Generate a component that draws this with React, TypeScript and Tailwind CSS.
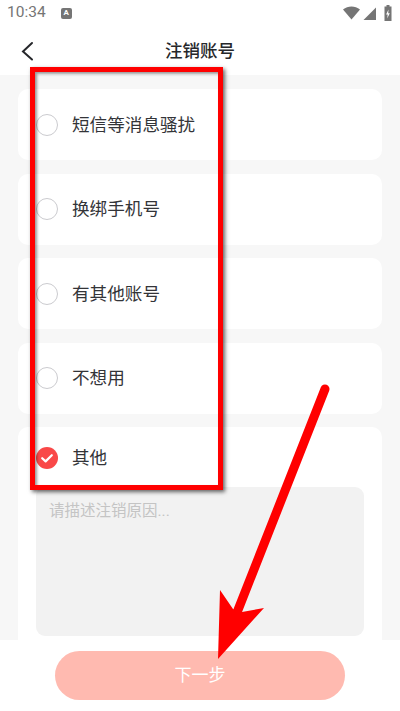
const font = { fontFamily: '"Roboto", "Noto Sans CJK SC", sans-serif' };

function Radio({ on }: { on?: boolean }) {
  if (on) {
    return (
      <svg width="22" height="22" viewBox="0 0 22 22" className="shrink-0">
        <circle cx="11" cy="11" r="11" fill="#f94848" />
        <path d="M6.200 11.200l3.400 3.200 6.200-6.200" fill="none" stroke="#fff" strokeWidth="2.200" strokeLinecap="round" strokeLinejoin="round" />
      </svg>
    );
  }
  return <span className="w-[22px] h-[22px] shrink-0 rounded-full border-[1.500px] border-[#cbcbcf] bg-white" />;
}

function Row({ label, on, className }: { label: string; on?: boolean; className: string }) {
  return (
    <div className={`flex items-center gap-[14px] pl-[18px] ${className}`}>
      <Radio on={on} />
      <span className="text-[17.600px] leading-6 text-[#333438]">{label}</span>
    </div>
  );
}

export default function App() {
  const rows = ["短信等消息骚扰", "换绑手机号", "有其他账号", "不想用"];
  return (
    <div style={font} className="relative w-[400px] h-[711px] overflow-hidden bg-white flex flex-col">
      <div className="h-[26px] shrink-0 flex items-center pl-[7px] pr-[7px] text-[#757575]">
        <span className="text-[15.500px] leading-none">10:34</span>
        <span className="ml-[15px] w-[11px] h-[11px] rounded-[2px] bg-[#757575] text-white text-[8px] font-bold flex items-center justify-center leading-none">A</span>
        <svg className="ml-auto" width="50" height="16" viewBox="0 0 50 16">
          <path d="M0 4.500C5 .5 12 .5 17 4.500L8.500 14.500Z" fill="#757575" />
          <path d="M33 2.500V15H20.500Z" fill="#757575" />
          <path d="M43.500 0h3v1.500h2V16h-7V1.500h2Z" fill="#757575" />
          <path d="M45.500 4.500l-2.400 5h1.600L44.200 13.500l2.600-5.200h-1.600Z" fill="#fff" />
        </svg>
      </div>

      <div className="h-[49px] shrink-0 relative flex items-center justify-center">
        <svg className="absolute left-[20px] top-[15px]" width="14" height="20" viewBox="0 0 14 20">
          <path d="M12 2L3 10.500l9 8" fill="none" stroke="#26272b" strokeWidth="2" strokeLinecap="round" />
        </svg>
        <span className="text-[17.500px] font-medium text-[#26272b] leading-6">注销账号</span>
      </div>

      <div className="h-[565px] shrink-0 bg-[#f7f7f7] px-[18px] pt-[14px] flex flex-col gap-[13.500px] overflow-hidden">
        {rows.map((r) => (
          <div key={r} className="h-[71px] shrink-0 bg-white rounded-[10px] flex items-center">
            <Row label={r} className="w-full" />
          </div>
        ))}
        <div className="flex-1 shrink-0 bg-white rounded-t-[10px] flex flex-col">
          <Row label="其他" on className="h-[60px] pt-[2px]" />
          <div className="mx-[18px] h-[149px] rounded-[9px] bg-[#f2f2f2] px-[13px] py-[13px] text-[15.500px] leading-[22px] text-[#c4c4c4]">
            请描述注销原因...
          </div>
        </div>
      </div>

      <div className="flex-1 bg-white flex justify-center pt-[11px]">
        <button className="w-[290px] h-[49px] rounded-full bg-[#ffbab0] text-white text-[17px]">下一步</button>
      </div>

      <div className="absolute left-[30px] top-[67px] w-[193px] h-[423px] border-[5px] border-[#ff0000] shadow-[2px_2px_4px_rgba(0,0,0,0.6),inset_2px_2px_3px_rgba(0,0,0,0.4)]" />

      <svg className="absolute left-0 top-0 pointer-events-none" width="400" height="711" viewBox="0 0 400 711">
        <path d="M325 389L238 610" stroke="#ff0000" strokeWidth="9" strokeLinecap="round" fill="none" />
        <path d="M220 590L233 609L242 612L264 608L218 659Z" fill="#ff0000" />
      </svg>
    </div>
  );
}
